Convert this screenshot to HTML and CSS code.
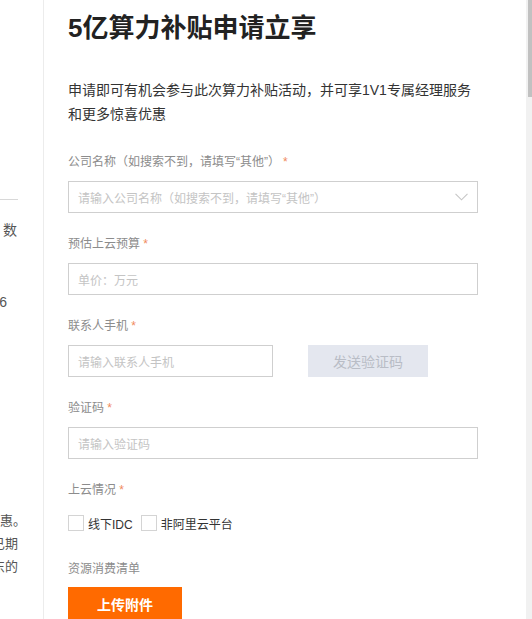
FILE: index.html
```html
<!DOCTYPE html>
<html lang="zh-CN">
<head>
<meta charset="utf-8">
<title>5亿算力补贴申请立享</title>
<link rel="stylesheet" href="styles.css">
</head>
<body>
<div class="page">
  <aside class="side">
    <div class="side-inner">
      <div class="side-rule"></div>
      <div class="side-num">数</div>
      <div class="side-six">6</div>
      <div class="side-para">
        <div class="p1">享受更多优惠。</div>
        <div class="p2">活动周期至已期</div>
        <div class="p3">以最终结果东的</div>
      </div>
    </div>
  </aside>
  <main class="main">
    <h1 class="title">5亿算力补贴申请立享</h1>
    <p class="desc">申请即可有机会参与此次算力补贴活动，并可享1V1专属经理服务和更多惊喜优惠</p>

    <div class="field">
      <div class="label">公司名称（如搜索不到，请填写“其他”）<span class="star star-gap">*</span></div>
      <div class="input select">
        <span class="ph">请输入公司名称（如搜索不到，请填写“其他”）</span>
        <svg class="chev" width="13" height="8" viewBox="0 0 13 8"><path d="M0.5 0.8 L6.5 6.8 L12.5 0.8" fill="none" stroke="#c6c6c6" stroke-width="1.1"/></svg>
      </div>
    </div>

    <div class="field">
      <div class="label">预估上云预算 <span class="star">*</span></div>
      <div class="input"><span class="ph">单价：万元</span></div>
    </div>

    <div class="field">
      <div class="label">联系人手机 <span class="star">*</span></div>
      <div class="row">
        <div class="input short"><span class="ph">请输入联系人手机</span></div>
        <div class="send">发送验证码</div>
      </div>
    </div>

    <div class="field">
      <div class="label">验证码 <span class="star">*</span></div>
      <div class="input"><span class="ph">请输入验证码</span></div>
    </div>

    <div class="field">
      <div class="label">上云情况 <span class="star">*</span></div>
      <div class="checks">
        <span class="box"></span><span class="ck-text">线下IDC</span>
        <span class="box box2"></span><span class="ck-text">非阿里云平台</span>
      </div>
    </div>

    <div class="field">
      <div class="label">资源消费清单</div>
      <div class="upload">上传附件</div>
    </div>
  </main>
  <div class="scroll"><div class="thumb"></div></div>
</div>
</body>
</html>
```

FILE: styles.css
```css
* { box-sizing: border-box; }
html, body { margin: 0; padding: 0; }
body {
  width: 532px;
  height: 619px;
  overflow: hidden;
  background: #fff;
  font-family: "Liberation Sans", "Noto Sans CJK SC", sans-serif;
  color: #333;
}
.page {
  display: flex;
  width: 532px;
  height: 619px;
}
.side {
  width: 44px;
  flex: none;
  border-right: 1px solid #ececec;
  overflow: hidden;
}
.side-inner {
  width: 300px;
  margin-left: -282px;
  text-align: right;
  color: #555;
}
.side-rule {
  margin-top: 199px;
  height: 1px;
  background: #d8d8d8;
  width: 300px;
}
.side-num {
  margin-top: 20px;
  font-size: 14px;
  line-height: 20px;
  padding-right: 1px;
}
.side-six {
  margin-top: 52px;
  font-size: 14px;
  line-height: 20px;
  padding-right: 11px;
}
.side-para {
  margin-top: 197px;
  font-size: 13px;
  line-height: 23px;
}
.side-para .p1 { margin-right: -8px; }

.main {
  width: 482px;
  flex: none;
  padding: 10px 0 0 24px;
}
.title {
  margin: 0;
  font-size: 26px;
  line-height: 36px;
  font-weight: bold;
  color: #222;
}
.desc {
  margin: 32px 0 0;
  width: 410px;
  font-size: 14px;
  line-height: 24px;
  color: #333;
}
.field { margin-top: 20px; }
.desc + .field { margin-top: 25px; }
.label {
  font-size: 12px;
  line-height: 22px;
  color: #8c8c8c;
  margin-bottom: 8px;
}
.star { color: #f08a5d; }
.star-gap { margin-left: 3px; }
.input {
  width: 410px;
  height: 32px;
  border: 1px solid #cfcfcf;
  display: flex;
  align-items: center;
  padding: 0 9px;
  justify-content: space-between;
}
.input.short { width: 205px; }
.ph {
  font-size: 12px;
  color: #c4c4c4;
}
.row {
  display: flex;
  gap: 35px;
}
.send {
  width: 120px;
  height: 32px;
  background: #e4e7ef;
  color: #b9bdc6;
  font-size: 14px;
  display: flex;
  align-items: center;
  justify-content: center;
}
.label + .checks { margin-top: -2px; }
.checks {
  height: 32px;
  display: flex;
  align-items: center;
}
.box {
  width: 16px;
  height: 16px;
  border: 1px solid #d4d4d4;
  background: #fff;
  margin-right: 4px;
}
.box2 { margin-left: 8px; }
.ck-text {
  font-size: 12px;
  color: #333;
}
.field:last-child { margin-top: 19px; }
.upload {
  width: 114px;
  height: 34px;
  background: #ff6a00;
  color: #fff;
  font-size: 14px;
  font-weight: bold;
  display: flex;
  align-items: center;
  justify-content: center;
  margin-top: -1px;
}
.scroll {
  width: 6px;
  flex: none;
  background: #f1f1f1;
  padding-left: 2px;
}
.thumb {
  width: 4px;
  height: 97px;
  background: #c1c1c1;
}
```
